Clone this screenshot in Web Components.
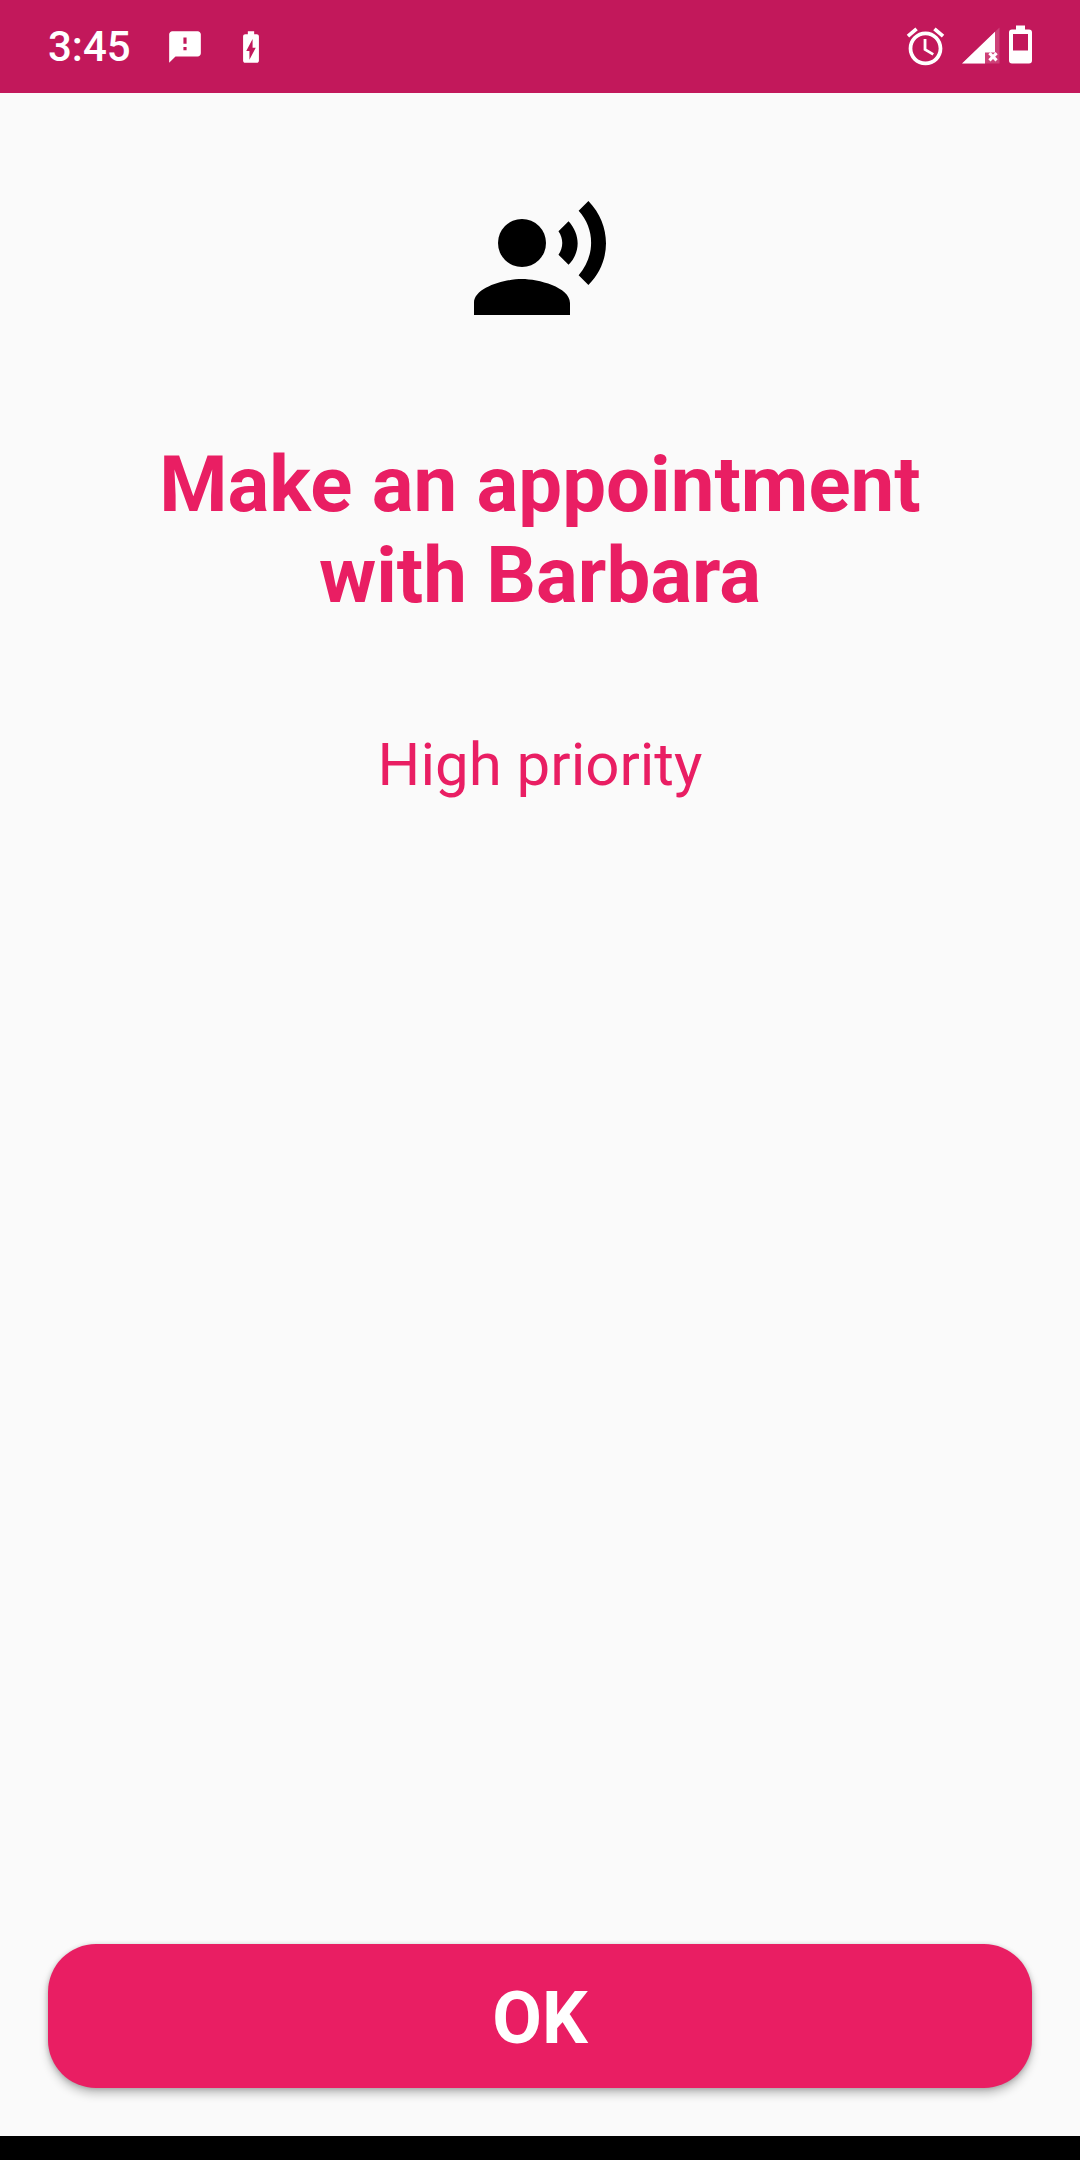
<!DOCTYPE html>
<html>
<head>
<meta charset="utf-8">
<title>Reminder</title>
<style>
  html, body { margin: 0; height: 100%; }
  body { background: #fafafa; font-family: Roboto, sans-serif; }
</style>
</head>
<body>
<reminder-screen>
  <status-bar slot="status"></status-bar>
  <reminder-icon slot="icon"></reminder-icon>
  <span slot="title">Make an appointment<br>with Barbara</span>
  <span slot="priority">High priority</span>
  <ok-button slot="action">OK</ok-button>
</reminder-screen>

<script>
// --- Status bar ---
class StatusBar extends HTMLElement {
  constructor() {
    super();
    this.attachShadow({ mode: 'open' });
    this.shadowRoot.innerHTML = `
      <style>
        :host {
          display: flex;
          align-items: center;
          height: 93px;
          background: #c2185b;
          color: #fff;
          font: 500 42px Roboto, sans-serif;
          padding: 0 36px 0 48px;
        }
        svg { display: block; fill: #fff; flex: none; }
        .time { width: 118px; }
        .sms { width: 38px; height: 38px; }
        .charge { width: 38px; height: 38px; margin-left: 28px; }
        .spacer { flex: 1; }
        .alarm { width: 45px; height: 45px; }
        .signal { width: 40px; height: 40px; margin-left: 12px; }
        .battery { width: 44px; height: 44px; }
      </style>
      <span class="time">3:45</span>
      <svg class="sms" viewBox="0 0 24 24"><path d="M20 2H4c-1.1 0-1.99.9-1.99 2L2 22l4-4h14c1.1 0 2-.9 2-2V4c0-1.1-.9-2-2-2zm-7 12h-2v-2h2v2zm0-4h-2V6h2v4z"/></svg>
      <svg class="charge" viewBox="0 0 24 24"><path d="M15.67 4H14V2h-4v2H8.33C7.6 4 7 4.6 7 5.33v15.33C7 21.4 7.6 22 8.33 22h7.33c.74 0 1.34-.6 1.34-1.33V5.33C17 4.6 16.4 4 15.67 4zM11 20v-5.5H9L13 7v5.5h2L11 20z"/></svg>
      <span class="spacer"></span>
      <svg class="alarm" viewBox="0 0 24 24"><path d="M22 5.72l-4.6-3.86-1.29 1.53 4.6 3.86L22 5.72zM7.88 3.39L6.6 1.86 2 5.71l1.29 1.53 4.59-3.85zM12.5 8H11v6l4.75 2.85.75-1.23-4-2.37V8zM12 4c-4.97 0-9 4.03-9 9s4.03 9 9 9 9-4.03 9-9-4.03-9-9-9zm0 16c-3.87 0-7-3.13-7-7s3.13-7 7-7 7 3.13 7 7-3.13 7-7 7z"/></svg>
      <svg class="signal" viewBox="0 0 40 40">
        <path opacity=".18" d="M39.500 .5V36.500H2Z"/>
        <path d="M35 4.800V25.500H25V36.500H2Z"/>
        <path d="M30.500 25l2.500 2.500 2.500-2.500 2.200 2.200-2.500 2.500 2.500 2.500-2.200 2.200-2.500-2.500-2.500 2.500-2.200-2.200 2.500-2.500-2.500-2.500z"/>
      </svg>
      <svg class="battery" viewBox="0 0 44 44"><path fill-rule="evenodd" d="M16 .5h9v4h4a3 3 0 0 1 3 3v28a3 3 0 0 1-3 3H12a3 3 0 0 1-3-3v-28a3 3 0 0 1 3-3h4zM13 9v16.500h15V9z"/></svg>
    `;
  }
}
customElements.define('status-bar', StatusBar);

// --- Record voice icon ---
class ReminderIcon extends HTMLElement {
  constructor() {
    super();
    this.attachShadow({ mode: 'open' });
    this.shadowRoot.innerHTML = `
      <style>
        :host { display: block; width: 144px; height: 144px; }
        svg { display: block; width: 100%; height: 100%; fill: #000; }
      </style>
      <svg viewBox="0 0 24 24">
        <circle cx="9" cy="9" r="4"/>
        <path d="M9 15c-2.670 0-8 1.340-8 4v2h16v-2c0-2.660-5.330-4-8-4zm7.760-9.640l-1.680 1.690c.84 1.180.84 2.710 0 3.890l1.680 1.690c2.020-2.020 2.020-5.070 0-7.270zM20.070 2l-1.630 1.630c2.770 3.020 2.770 7.560 0 10.740L20.070 16c3.900-3.890 3.910-9.950 0-14z"/>
      </svg>
    `;
  }
}
customElements.define('reminder-icon', ReminderIcon);

// --- OK button ---
class OkButton extends HTMLElement {
  constructor() {
    super();
    this.attachShadow({ mode: 'open' });
    this.shadowRoot.innerHTML = `
      <style>
        :host {
          display: flex;
          align-items: center;
          justify-content: center;
          height: 144px;
          padding-top: 5px;
          box-sizing: border-box;
          border-radius: 48px;
          background: #e91e63;
          color: #fff;
          font: 700 72px Roboto, sans-serif;
          box-shadow: 0 6px 10px rgba(0,0,0,.22), 0 1px 5px rgba(0,0,0,.2);
        }
      </style>
      <slot></slot>
    `;
  }
}
customElements.define('ok-button', OkButton);

// --- Whole screen ---
class ReminderScreen extends HTMLElement {
  constructor() {
    super();
    this.attachShadow({ mode: 'open' });
    this.shadowRoot.innerHTML = `
      <style>
        :host {
          display: flex;
          flex-direction: column;
          height: 2160px;
          background: #fafafa;
          color: #e91e63;
          font-family: Roboto, sans-serif;
        }
        .content {
          flex: 1;
          display: flex;
          flex-direction: column;
          align-items: center;
          text-align: center;
          padding-top: 96px;
        }
        .title {
          margin-top: 106px;
          font-size: 78px;
          font-weight: 700;
          line-height: 91px;
        }
        .priority {
          margin-top: 109px;
          font-size: 60px;
          line-height: 70px;
        }
        .action { padding: 0 48px 48px; }
        .nav { height: 24px; background: #000; }
      </style>
      <slot name="status"></slot>
      <div class="content">
        <slot name="icon"></slot>
        <div class="title"><slot name="title"></slot></div>
        <div class="priority"><slot name="priority"></slot></div>
      </div>
      <div class="action"><slot name="action"></slot></div>
      <div class="nav"></div>
    `;
  }
}
customElements.define('reminder-screen', ReminderScreen);
</script>
</body>
</html>
